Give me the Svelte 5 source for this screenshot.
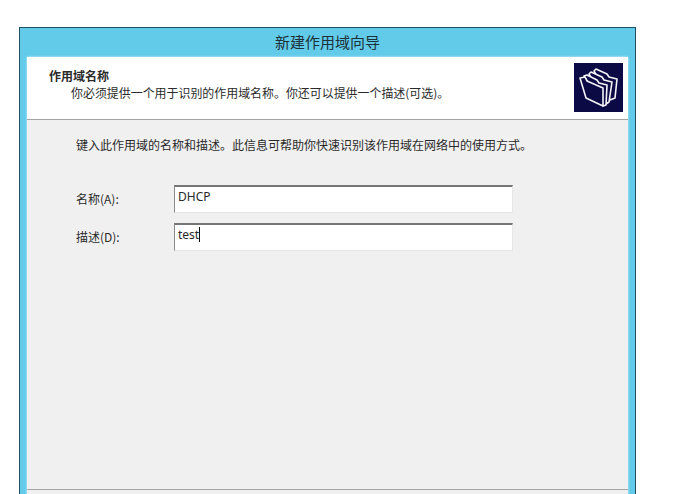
<script>
  let name = "DHCP";
  let desc = "test";
</script>

<div class="wizard">
  <div class="title">新建作用域向导</div>
  <div class="pane">
    <header class="head">
      <div class="head-text">
        <div class="head-title">作用域名称</div>
        <div class="head-sub">你必须提供一个用于识别的作用域名称。你还可以提供一个描述(可选)。</div>
      </div>
      <svg class="logo" viewBox="0 0 49 49" aria-hidden="true">
        <rect width="49" height="49" fill="#0b0a45" />
        <g fill="#0b0a45" stroke="#f4f4f8" stroke-width="1.6" stroke-linejoin="round">
          <path d="M20 8 L22 6 L33 11 L35 14 L43 16 L41 35 L36 37 Z" />
          <path d="M15 11 L17 9 L28 14 L30 17 L38 19 L35 39 L32 41 Z" />
          <path d="M10 13 L13 12 L23 17 L25 20 L33 22 L32 42 L29 43 Z" />
          <path d="M6 15 L11 14 L13 18 L29 25 L29 43 L12 35 Z" />
        </g>
      </svg>
    </header>
    <main class="body">
      <p class="intro">键入此作用域的名称和描述。此信息可帮助你快速识别该作用域在网络中的使用方式。</p>
      <div class="form">
        <label class="label" for="scope-name">名称(A):</label>
        <input id="scope-name" class="field" bind:value={name} />
        <label class="label" for="scope-desc">描述(D):</label>
        <div class="field">{desc}<span class="caret"></span></div>
      </div>
    </main>
    <div class="foot"></div>
  </div>
</div>

<style>
  :global(body) {
    background: #fff;
    overflow: hidden;
    height: 494px;
  }

  .wizard {
    box-sizing: border-box;
    width: 617px;
    height: 467px;
    overflow: hidden;
    margin: 27px 0 0 19px;
    padding: 0 7px;
    background: #62cbe9;
    border: 1px solid #1d4f63;
    border-bottom: 0;
    font-family: "Noto Sans CJK SC", "Liberation Sans", sans-serif;
    color: #2a2a2a;
  }

  .title {
    height: 29px;
    line-height: 27px;
    text-align: center;
    font-size: 15px;
    color: #1c3038;
  }

  .pane {
    display: flex;
    flex-direction: column;
    background: #f0f0f0;
    box-shadow: 0 0 2px #e6f7fc;
  }

  .head {
    box-sizing: border-box;
    display: flex;
    justify-content: space-between;
    height: 63px;
    padding: 6px 5px 0 22px;
    background: #fff;
    border-bottom: 1px solid #a4a4a4;
  }

  .head-title {
    margin-top: 6px;
    font-size: 12px;
    line-height: 14px;
    font-weight: 700;
  }

  .head-sub {
    margin: 2px 0 0 22px;
    font-size: 11.95px;
    line-height: 16px;
  }

  .logo {
    width: 49px;
    height: 49px;
    flex: none;
  }

  .body {
    height: 369px;
    padding-left: 49px;
  }

  .intro {
    margin: 16px 0 0;
    font-size: 12px;
    line-height: 17px;
    white-space: nowrap;
  }

  .form {
    display: grid;
    grid-template-columns: 98px 339px;
    grid-auto-rows: 28px;
    row-gap: 10px;
    margin: 32px 0 0 0;
    align-items: center;
  }

  .label {
    font-size: 12px;
    line-height: 28px;
  }

  .field {
    box-sizing: border-box;
    width: 339px;
    height: 28px;
    margin: 0;
    padding: 2px 3px 0;
    background: #fff;
    border: 0;
    border-top: 2px solid #767676;
    border-left: 1px solid #8a8a8a;
    border-right: 1px solid #e6e6e6;
    border-bottom: 1px solid #e6e6e6;
    border-radius: 0;
    outline: none;
    font: 12px/16px "Noto Sans", "Liberation Sans", sans-serif;
    color: #2a2a2a;
    display: flex;
    align-items: flex-start;
  }

  input.field {
    padding: 0 3px 6px;
  }

  .caret {
    width: 1px;
    height: 15px;
    background: #111;
  }

  .foot {
    border-top: 1px solid #a4a4a4;
    height: 10px;
    background: #f0f0f0;
  }
</style>
